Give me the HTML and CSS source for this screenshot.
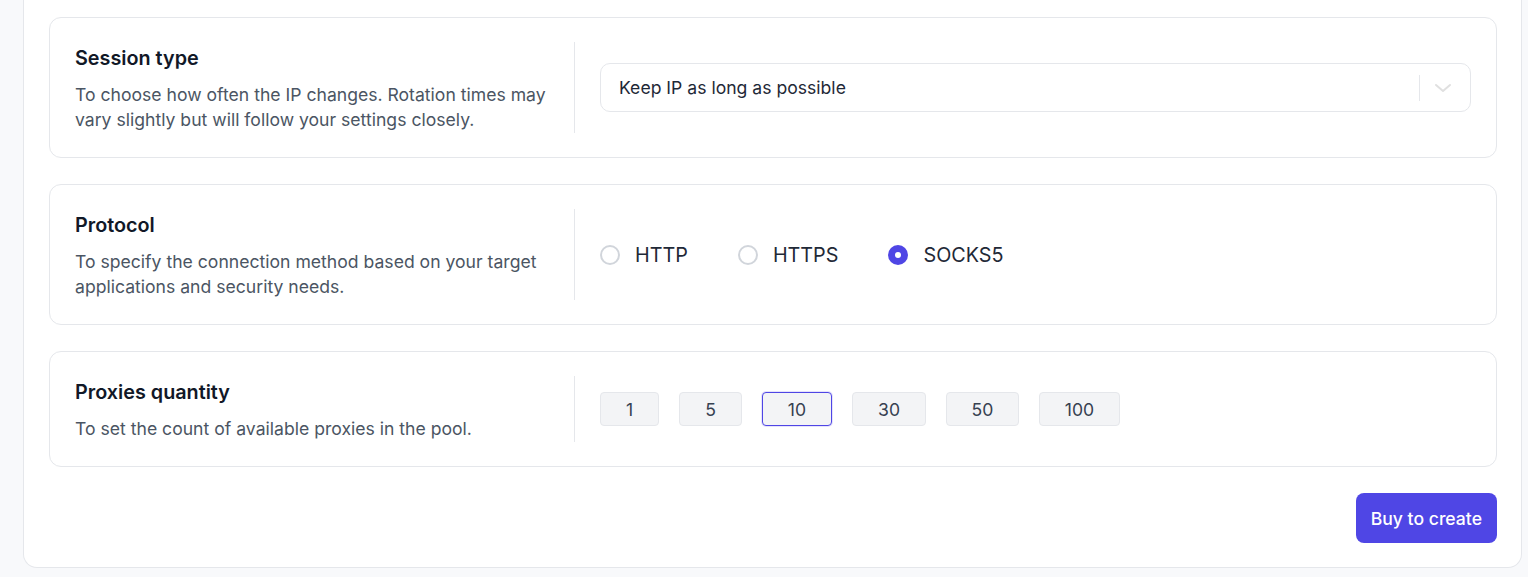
FILE: index.html
```html
<!DOCTYPE html>
<html lang="en">
<head>
<meta charset="utf-8">
<title>Proxy settings</title>
<link rel="stylesheet" href="styles.css">
</head>
<body>
<div class="page">
  <div class="panel">
    <section class="card">
      <div class="info">
        <h3 class="title">Session type</h3>
        <p class="desc">To choose how often the IP changes. Rotation times may vary slightly but will follow your settings closely.</p>
      </div>
      <div class="control">
        <div class="select">
          <span class="select-value">Keep IP as long as possible</span>
          <span class="select-sep"></span>
          <span class="select-arrow">
            <svg width="18" height="10" viewBox="0 0 18 10" fill="none" stroke="currentColor" stroke-width="2" stroke-linecap="round" stroke-linejoin="round"><path d="M2 2l7 6 7-6"/></svg>
          </span>
        </div>
      </div>
    </section>

    <section class="card">
      <div class="info">
        <h3 class="title">Protocol</h3>
        <p class="desc">To specify the connection method based on your target applications and security needs.</p>
      </div>
      <div class="control">
        <div class="radios">
          <label class="radio"><span class="dot"></span><span class="radio-label">HTTP</span></label>
          <label class="radio"><span class="dot"></span><span class="radio-label">HTTPS</span></label>
          <label class="radio"><span class="dot dot-on"></span><span class="radio-label">SOCKS5</span></label>
        </div>
      </div>
    </section>

    <section class="card">
      <div class="info">
        <h3 class="title">Proxies quantity</h3>
        <p class="desc">To set the count of available proxies in the pool.</p>
      </div>
      <div class="control">
        <div class="qty">
          <button class="qty-btn q1">1</button>
          <button class="qty-btn q5">5</button>
          <button class="qty-btn q10 qty-active">10</button>
          <button class="qty-btn q30">30</button>
          <button class="qty-btn q50">50</button>
          <button class="qty-btn q100">100</button>
        </div>
      </div>
    </section>

    <div class="actions">
      <button class="buy">Buy to create</button>
    </div>
  </div>
</div>
</body>
</html>
```

FILE: styles.css
```css
* { box-sizing: border-box; }

html, body {
  margin: 0;
  padding: 0;
  background: #f8f9fb;
  font-family: Inter, "Noto Sans", "Liberation Sans", sans-serif;
}

.page {
  padding: 0 6px 9px 23px;
}

.panel {
  background: #ffffff;
  border: 1px solid #e5e7eb;
  border-top: 0;
  border-radius: 0 0 14px 14px;
  padding: 17px 24px 24px 25px;
  display: flex;
  flex-direction: column;
  gap: 26px;
}

.card {
  border: 1px solid #e5e7eb;
  border-radius: 12px;
  padding: 24px 24px 24px 25px;
  display: flex;
  align-items: stretch;
}

.info {
  width: 499px;
  flex: none;
  padding-right: 24px;
}

.title {
  margin: 0;
  font-size: 19.8px;
  line-height: 32px;
  font-weight: 600;
  color: #111827;
}

.desc {
  margin: 8px 0 0;
  font-size: 17.6px;
  line-height: 25px;
  color: #4b5563;
  padding-bottom: 1px;
}

.control {
  flex: 1;
  border-left: 1px solid #e5e7eb;
  padding-left: 25px;
  display: flex;
  align-items: center;
  min-width: 0;
}

.select {
  flex: 1;
  height: 49px;
  border: 1px solid #e5e7eb;
  border-radius: 10px;
  display: flex;
  align-items: center;
  padding-left: 18px;
  margin-right: 1px;
}

.select-value {
  flex: 1;
  font-size: 17.6px;
  color: #1f2937;
}

.select-sep {
  width: 1px;
  height: 26px;
  background: #e5e7eb;
}

.select-arrow {
  width: 50px;
  padding-right: 4px;
  display: flex;
  justify-content: center;
  color: #e0e0e0;
}

.radios {
  display: flex;
  align-items: center;
  gap: 50px;
}

.radio {
  display: flex;
  align-items: center;
  gap: 15px;
}

.dot {
  width: 20px;
  height: 20px;
  border-radius: 50%;
  border: 2px solid #d1d5db;
  background: #fff;
  display: block;
}

.dot-on {
  border: 0;
  background: #4f46e5;
  position: relative;
}

.dot-on::after {
  content: "";
  position: absolute;
  left: 7px;
  top: 7px;
  width: 6px;
  height: 6px;
  border-radius: 50%;
  background: #fff;
}

.radio-label {
  font-size: 19.8px;
  color: #1f2937;
}

.qty {
  display: flex;
  gap: 20px;
  align-items: center;
}

.qty-btn {
  height: 34px;
  border: 1px solid #e5e7eb;
  background: #f3f4f6;
  border-radius: 4px;
  font-family: inherit;
  font-size: 17.6px;
  color: #374151;
  padding: 0;
}

.q1 { width: 59px; }
.q5 { width: 63px; }
.q10 { width: 70px; }
.q30 { width: 74px; }
.q50 { width: 73px; }
.q100 { width: 81px; }

.qty-active {
  border: 1.5px solid #4f46e5;
  box-shadow: 0 0 0 1px rgba(79, 70, 229, 0.15);
}

.actions {
  display: flex;
  justify-content: flex-end;
}

.buy {
  height: 50px;
  padding: 0 15px;
  border: 0;
  border-radius: 8px;
  background: #4f46e5;
  color: #ffffff;
  font-family: inherit;
  font-size: 17.6px;
  font-weight: 500;
}
```
